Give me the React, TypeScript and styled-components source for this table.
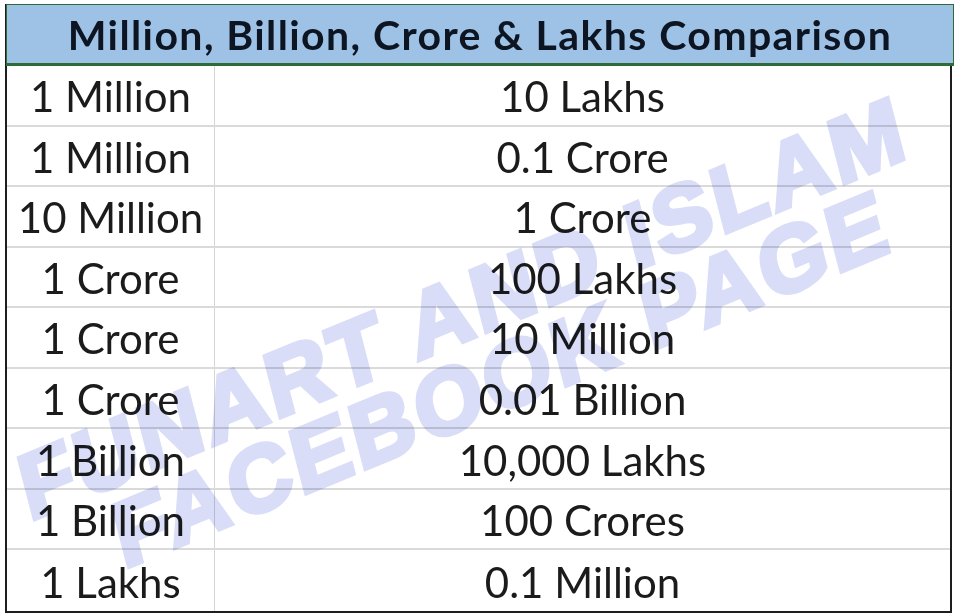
import React from "react";
import styled, { createGlobalStyle } from "styled-components";

const rows: [string, string][] = [
  ["1 Million", "10 Lakhs"],
  ["1 Million", "0.1 Crore"],
  ["10 Million", "1 Crore"],
  ["1 Crore", "100 Lakhs"],
  ["1 Crore", "10 Million"],
  ["1 Crore", "0.01 Billion"],
  ["1 Billion", "10,000 Lakhs"],
  ["1 Billion", "100 Crores"],
  ["1 Lakhs", "0.1 Million"],
];

const GlobalStyle = createGlobalStyle`
  html, body {
    margin: 0;
    padding: 0;
    background: #ffffff;
  }
  body {
    font-family: Lato, "Liberation Sans", sans-serif;
    overflow: hidden;
  }
`;

const Page = styled.div`
  position: relative;
  width: 960px;
  height: 615px;
  box-sizing: border-box;
  padding: 4px 8px 2px 5px;
  background: #fff;
  overflow: hidden;
`;

const Sheet = styled.div`
  display: flex;
  flex-direction: column;
  border-left: 2px solid #1e1e1e;
  border-right: 2px solid #1e1e1e;
  border-bottom: 2px solid #1e1e1e;
  height: 100%;
  box-sizing: border-box;
`;

const Header = styled.div`
  height: 58px;
  margin-left: -1px;
  margin-right: -4px;
  display: flex;
  align-items: center;
  justify-content: center;
  background: #9ec2e6;
  border: 1px solid #2f6b35;
  border-bottom: 3px solid #2f6b35;
  color: #0d1522;
  font-weight: 700;
  font-size: 41px;
  letter-spacing: 1.4px;
`;

const Body = styled.div`
  flex: 1;
  display: grid;
  grid-template-rows: repeat(${rows.length}, 1fr);
`;

const Row = styled.div<{ $last?: boolean }>`
  display: grid;
  grid-template-columns: 208px 1fr;
  border-bottom: ${({ $last }) => ($last ? "none" : "2px solid #dadada")};
`;

const Cell = styled.div<{ $first?: boolean }>`
  display: flex;
  align-items: center;
  justify-content: center;
  color: #1b1b1b;
  font-size: 42px;
  padding-top: 2px;
  border-right: ${({ $first }) => ($first ? "1px solid #d6d6d6" : "none")};
`;

const Watermark = styled.div`
  position: absolute;
  left: 466px;
  top: 350px;
  width: 1040px;
  transform: translate(-50%, -50%) rotate(-22.5deg) skewX(-8deg);
  display: flex;
  flex-direction: column;
  align-items: flex-start;
  padding-left: 50px;
  box-sizing: border-box;
  pointer-events: none;
  mix-blend-mode: multiply;
  color: #d9ddf7;
  -webkit-text-stroke: 5px #d9ddf7;
  font-family: "Liberation Sans", Arial, sans-serif;
  font-weight: 700;
  font-size: 90px;
  line-height: 80px;
  letter-spacing: 4px;
  white-space: nowrap;
`;

const MarkLine = styled.span<{ $shift?: number }>`
  padding-left: ${({ $shift }) => $shift ?? 0}px;
`;

export default function App() {
  return (
    <>
      <GlobalStyle />
      <Page>
        <Sheet>
          <Header>Million, Billion, Crore &amp; Lakhs Comparison</Header>
          <Body>
            {rows.map(([a, b], i) => (
              <Row key={i} $last={i === rows.length - 1}>
                <Cell $first>{a}</Cell>
                <Cell>{b}</Cell>
              </Row>
            ))}
          </Body>
        </Sheet>
        <Watermark>
          <MarkLine>FUNART AND ISLAM</MarkLine>
          <MarkLine $shift={80}>FACEBOOK PAGE</MarkLine>
        </Watermark>
      </Page>
    </>
  );
}
